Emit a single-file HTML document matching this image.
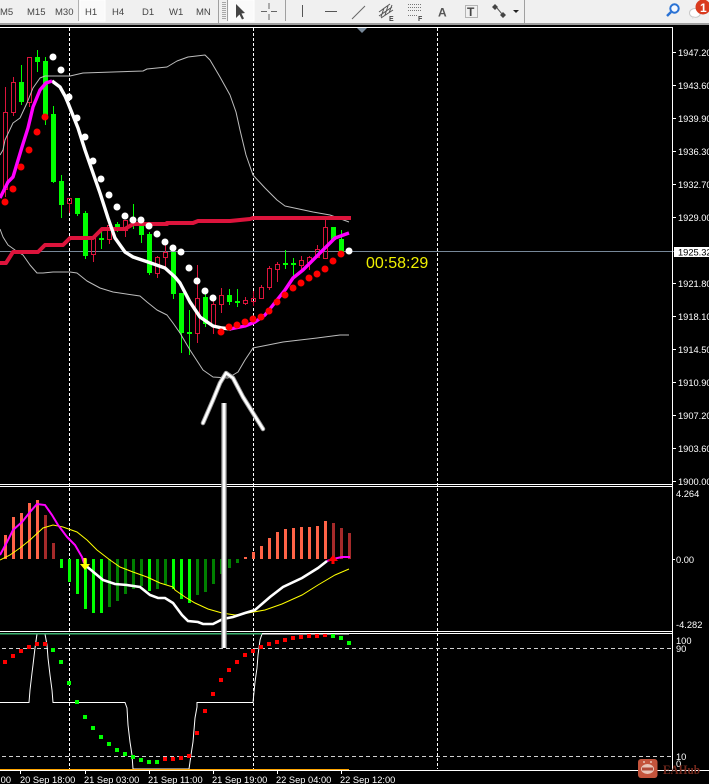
<!DOCTYPE html>
<html><head><meta charset="utf-8"><title>Chart</title>
<style>
html,body{margin:0;padding:0;background:#000;width:709px;height:784px;overflow:hidden}
svg{display:block}
text{font-family:"Liberation Sans",sans-serif}
</style></head><body>
<svg width="709" height="784" viewBox="0 0 709 784" xmlns="http://www.w3.org/2000/svg">
<rect width="709" height="784" fill="#000"/>
<!-- grid -->
<g stroke="#fff" stroke-width="1" stroke-dasharray="3 2" fill="none" shape-rendering="crispEdges">
<path d="M69.5 28V769M253.5 28V769M437.5 28V769"/>
</g>
<path d="M2 648.5H672M2 756.5H672" stroke="#d0d0d0" stroke-dasharray="4 3" fill="none" shape-rendering="crispEdges"/>
<!-- current price line -->
<rect x="0" y="251" width="674" height="1" fill="#778899"/>
<!-- green candles wicks -->
<path shape-rendering="crispEdges" stroke="#0f0" fill="none" d="M21.5 65V105M37.5 50V72M45.5 57V125M53.5 106V183M61.5 175V218M77.5 198V216M85.5 211V259M101.5 232V249M117.5 222V232M133.5 204V229M141.5 225V243M149.5 232V275M173.5 252V299M181.5 293V353M189.5 310V355M205.5 292V327M229.5 289V305M237.5 289V307M285.5 250V269M293.5 258V278M333.5 227V240M341.5 230V254"/>
<path shape-rendering="crispEdges" fill="#0f0" d="M19 82h5v20h-5zM35 57h5v5h-5zM43 61h5v54h-5zM51 114h5v68h-5zM59 181h5v24h-5zM75 198h5v16h-5zM83 213h5v43h-5zM99 238h5v2h-5zM115 224h5v4h-5zM131 220h5v6h-5zM139 225h5v10h-5zM147 234h5v39h-5zM171 252h5v42h-5zM179 293h5v40h-5zM187 332h5v2h-5zM203 297h5v27h-5zM227 295h5v7h-5zM235 301h5v2h-5zM283 263h5v2h-5zM291 263h5v2h-5zM331 227h5v13h-5zM339 239h5v13h-5z"/>
<!-- red hollow candles -->
<path shape-rendering="crispEdges" stroke="#dc143c" fill="none" d="M5.5 87V112M5.5 190V197M3.5 112.5h4v77h-4zM13.5 77V82M13.5 112V116M11.5 82.5h4v30h-4zM29.5 102V107M27.5 57.5h4v45h-4zM69.5 203V213M67.5 198.5h4v5h-4zM93.5 254V262M91.5 238.5h4v16h-4zM109.5 239V244M107.5 225.5h4v14h-4zM125.5 230V237M123.5 220.5h4v10h-4zM157.5 256V257M157.5 273V278M155.5 257.5h4v16h-4zM165.5 245V252M165.5 257V268M163.5 252.5h4v5h-4zM197.5 265V298M197.5 333V343M195.5 298.5h4v35h-4zM213.5 298V304M213.5 325V334M211.5 304.5h4v21h-4zM221.5 288V295M221.5 304V313M219.5 295.5h4v9h-4zM245.5 297V300M245.5 303V305M243.5 300.5h4v3h-4zM253.5 291V298M253.5 301V306M251.5 298.5h4v3h-4zM261.5 285V287M259.5 287.5h4v11h-4zM269.5 266V268M269.5 287V290M267.5 268.5h4v19h-4zM277.5 262V264M277.5 269V282M275.5 264.5h4v5h-4zM301.5 256V260M301.5 265V272M299.5 260.5h4v5h-4zM309.5 256V257M309.5 262V270M307.5 257.5h4v5h-4zM317.5 245V249M315.5 249.5h4v8h-4zM325.5 220V227M323.5 227.5h4v31h-4z"/>
<!-- bollinger -->
<g fill="none" stroke="#bdbdbd" stroke-width="1" stroke-linejoin="round">
<path d="M0 155L3 150L5 140L13 123L20 118L27 103L33 88L40 78L45 76L70 76L83 73L113 72L143 71L147 69L167 67L177 61L188 57L205 55L210 60L220 77L230 95L236 112L240 130L246 155L253 175L265 188L277 200L285 206L313 212L330 215L349 222"/>
<path d="M0 229L3 237L8 245L15 250L23 255L30 265L37 273L43 273L53 272L70 272L77 273L87 281L100 288L113 292L140 296L147 302L157 310L167 315L173 323L180 333L190 350L203 370L213 377L228 378L238 372L245 360L253 348L263 346L283 342L317 338L340 335L349 335"/>
</g>
<!-- stepped red -->
<path fill="none" stroke="#dc143c" stroke-width="4" stroke-linejoin="round" d="M0 263H6L13 252H38L45 245H63L70 238H93L102 229H125L133 224H167V223H193L198 221H230L250 219L253 218H351"/>
<!-- MA -->
<path fill="none" stroke="#fff" stroke-width="3.4" stroke-linejoin="round" d="M52 81L60 87L65 96L68 103L78 128L85 150L93 173L100 193L108 218L115 238L125 252L133 257L148 262L165 268L175 277L180 283L190 302L200 317L213 326L222 328L231 329"/>
<path fill="none" stroke="#f0f" stroke-width="3.4" stroke-linejoin="round" d="M0 198L8 182L13 177L22 147L28 128L33 107L40 90L46 83L52 81M230 329L245 326L255 322L265 315L273 305L285 290L293 278L303 270L320 253L335 238L349 233"/>
<!-- upper dots -->
<g fill="#fff">
<circle cx="53" cy="57" r="3.5"/><circle cx="61" cy="70" r="3.5"/><circle cx="69" cy="97" r="3.5"/><circle cx="77" cy="118" r="3.5"/><circle cx="85" cy="137" r="3.5"/><circle cx="93" cy="161" r="3.5"/><circle cx="101" cy="179" r="3.5"/><circle cx="109" cy="195" r="3.5"/><circle cx="117" cy="207" r="3.5"/><circle cx="125" cy="216" r="3.5"/><circle cx="133" cy="220" r="3.5"/><circle cx="141" cy="220" r="3.5"/><circle cx="149" cy="226" r="3.5"/><circle cx="157" cy="234" r="3.5"/><circle cx="165" cy="242" r="3.5"/><circle cx="173" cy="248" r="3.5"/><circle cx="181" cy="252" r="3.5"/><circle cx="189" cy="268" r="3.5"/><circle cx="197" cy="281" r="3.5"/><circle cx="205" cy="291" r="3.5"/><circle cx="213" cy="298" r="3.5"/><circle cx="349" cy="251" r="3.5"/>
</g>
<g fill="#f00">
<circle cx="45" cy="117" r="3.5"/><circle cx="37" cy="132" r="3.5"/><circle cx="29" cy="150" r="3.5"/><circle cx="21" cy="167" r="3.5"/><circle cx="13" cy="189" r="3.5"/><circle cx="5" cy="202" r="3.5"/><circle cx="221" cy="332" r="3.5"/><circle cx="229" cy="327" r="3.5"/><circle cx="237" cy="325" r="3.5"/><circle cx="245" cy="322" r="3.5"/><circle cx="253" cy="319" r="3.5"/><circle cx="261" cy="317" r="3.5"/><circle cx="269" cy="311" r="3.5"/><circle cx="277" cy="302" r="3.5"/><circle cx="285" cy="295" r="3.5"/><circle cx="293" cy="288" r="3.5"/><circle cx="301" cy="283" r="3.5"/><circle cx="309" cy="278" r="3.5"/><circle cx="317" cy="274" r="3.5"/><circle cx="325" cy="269" r="3.5"/><circle cx="333" cy="261" r="3.5"/><circle cx="341" cy="254" r="3.5"/>
</g>
<text x="366" y="268" font-size="16" fill="#f0f000">00:58:29</text>
<!-- MACD histogram -->
<path shape-rendering="crispEdges" fill="#ff6347" d="M4 535h3v24h-3zM12 517h3v42h-3zM20 513h3v46h-3zM28 503h3v56h-3zM36 500h3v59h-3zM244 557h3v2h-3zM252 552h3v7h-3zM260 546h3v13h-3zM268 538h3v21h-3zM276 532h3v27h-3zM284 529h3v30h-3zM292 528h3v31h-3zM300 527h3v32h-3zM308 527h3v32h-3zM316 526h3v33h-3zM324 521h3v38h-3z"/>
<path shape-rendering="crispEdges" fill="#a52a2a" d="M44 515h3v44h-3zM52 543h3v16h-3zM332 523h3v36h-3zM340 528h3v31h-3zM348 533h3v26h-3z"/>
<path shape-rendering="crispEdges" fill="#0f0" d="M60 559h3v9h-3zM68 559h3v23h-3zM76 559h3v35h-3zM84 559h3v50h-3zM92 559h3v54h-3zM100 559h3v54h-3zM148 559h3v32h-3zM172 559h3v30h-3zM180 559h3v40h-3zM188 559h3v44h-3z"/>
<path shape-rendering="crispEdges" fill="#008000" d="M108 559h3v48h-3zM116 559h3v42h-3zM124 559h3v35h-3zM132 559h3v30h-3zM140 559h3v27h-3zM156 559h3v30h-3zM164 559h3v26h-3zM196 559h3v36h-3zM204 559h3v33h-3zM212 559h3v25h-3zM220 559h3v15h-3zM228 559h3v9h-3zM236 559h3v4h-3z"/>
<path fill="none" stroke="#ff0" stroke-width="1" d="M0 560L10 555L20 548L30 540L43 528L53 525L63 527L77 532L87 540L97 550L110 560L120 567L133 572L147 577L160 583L173 587L175 590L185 597L195 603L208 609L222 613L235 615L248 613L265 610L282 604L302 595L318 585L335 575L349 569"/>
<path fill="none" stroke="#f0f" stroke-width="2" d="M0 555L7 542L13 530L22 522L30 512L37 504L45 505L52 515L58 525L67 537L75 545L82 557L84 563M327 561L333 559L342 557L350 557"/>
<path fill="none" stroke="#fff" stroke-width="2.6" d="M85 565L97 575L103 580L115 584L127 585L140 587L150 595L158 598L165 598L173 603L182 615L188 621L198 622L203 624L213 624L223 619L233 617L245 613L255 610L270 597L283 587L302 578L318 568L327 561"/>
<path d="M83.500 558h3v6h3.500l-5 6l-5-6h3.500z" fill="#ff0"/>
<path d="M331.500 564h3v-3h3.500l-5-6l-5 6h3.500z" fill="#f00"/>
<!-- Stochastic line -->
<path fill="none" stroke="#fff" stroke-width="1" d="M0 702.500H29L30 690L32 673L33 665L35 648L37 634H45L47 645L48 658L50 675L52 690L53 702.500H125L127 708L128 725L130 742L132 755L133 769H189L191 755L193 742L195 718L197 707L197 702.500H253L255 682L257 668L258 655L260 640L262 634H349"/>
<!-- squares -->
<path shape-rendering="crispEdges" fill="#f00" d="M3 660h4v4h-4zM11 654h4v4h-4zM19 649h4v4h-4zM27 645h4v4h-4zM35 642h4v4h-4zM43 642h4v4h-4zM163 757h4v4h-4zM171 757h4v4h-4zM179 756h4v4h-4zM187 754h4v4h-4zM195 731h4v4h-4zM203 709h4v4h-4zM211 692h4v4h-4zM219 678h4v4h-4zM227 668h4v4h-4zM235 660h4v4h-4zM243 653h4v4h-4zM251 649h4v4h-4zM259 645h4v4h-4zM267 642h4v4h-4zM275 640h4v4h-4zM283 638h4v4h-4zM291 636h4v4h-4zM299 635h4v4h-4zM307 634h4v4h-4zM315 634h4v4h-4zM323 633h4v4h-4z"/>
<path shape-rendering="crispEdges" fill="#0f0" d="M51 648h4v4h-4zM59 660h4v4h-4zM67 681h4v4h-4zM75 700h4v4h-4zM83 715h4v4h-4zM91 726h4v4h-4zM99 735h4v4h-4zM107 742h4v4h-4zM115 748h4v4h-4zM123 752h4v4h-4zM131 755h4v4h-4zM139 758h4v4h-4zM147 760h4v4h-4zM155 760h4v4h-4zM331 634h4v4h-4zM339 636h4v4h-4zM347 641h4v4h-4z"/>
<!-- frames -->
<g shape-rendering="crispEdges" fill="#fff">
<rect x="0" y="27" width="673" height="1"/>
<rect x="672" y="27" width="1" height="744"/>
<rect x="0" y="484" width="673" height="1"/>
<rect x="0" y="486" width="673" height="1"/>
<rect x="0" y="631" width="673" height="1"/>
<rect x="0" y="633" width="673" height="1"/>
<rect x="0" y="770" width="709" height="1"/>
<rect x="20" y="771" width="1" height="3"/><rect x="85" y="771" width="1" height="3"/><rect x="149" y="771" width="1" height="3"/><rect x="213" y="771" width="1" height="3"/><rect x="277" y="771" width="1" height="3"/><rect x="341" y="771" width="1" height="3"/>
<path d="M673 52h3v1h-3zM673 85h3v1h-3zM673 118h3v1h-3zM673 151h3v1h-3zM673 184h3v1h-3zM673 217h3v1h-3zM673 283h3v1h-3zM673 316h3v1h-3zM673 349h3v1h-3zM673 382h3v1h-3zM673 415h3v1h-3zM673 448h3v1h-3zM673 481h3v1h-3zM673 559h2v1h-2z"/>
</g>
<rect x="0" y="633" width="262" height="1.500" fill="#3cb371" shape-rendering="crispEdges"/>
<rect x="0" y="769" width="349" height="1" fill="#ffa500" shape-rendering="crispEdges"/>
<polygon points="357,28 367,28 362,33" fill="#778899"/>
<!-- arrow annotation -->
<path d="M224 403V648" stroke="#8a8a8a" stroke-width="5.500" fill="none"/>
<path d="M224 403V648" stroke="#fff" stroke-width="3" fill="none"/>
<path d="M203 423L213 400L220 383L226 373L233 378L243 397L253 413L263 429" stroke="#999" stroke-width="4.500" fill="none" stroke-linecap="round" stroke-linejoin="round"/>
<path d="M203 423L213 400L220 383L226 373L233 378L243 397L253 413L263 429" stroke="#fff" stroke-width="2.600" fill="none" stroke-linecap="round" stroke-linejoin="round"/>
<!-- price labels -->
<g font-size="9.300" fill="#fff">
<text x="678" y="56">1947.20</text><text x="678" y="89">1943.60</text><text x="678" y="122">1939.90</text><text x="678" y="155">1936.30</text><text x="678" y="188">1932.70</text><text x="678" y="221">1929.00</text><text x="678" y="287">1921.80</text><text x="678" y="320">1918.10</text><text x="678" y="353">1914.50</text><text x="678" y="386">1910.90</text><text x="678" y="419">1907.20</text><text x="678" y="452">1903.60</text><text x="678" y="485">1900.00</text>
<text x="676" y="497">4.264</text><text x="676" y="563">0.00</text><text x="676" y="628">-4.282</text>
<text x="676" y="644">100</text><text x="676" y="652">90</text><text x="676" y="760">10</text><text x="676" y="767">0</text>
<text x="0" y="783" text-anchor="end" dx="11">00</text>
<text x="20" y="783">20 Sep 18:00</text><text x="84" y="783">21 Sep 03:00</text><text x="148" y="783">21 Sep 11:00</text><text x="212" y="783">21 Sep 19:00</text><text x="276" y="783">22 Sep 04:00</text><text x="340" y="783">22 Sep 12:00</text>
</g>
<rect x="674" y="247" width="35" height="10" fill="#fff"/>
<text x="678" y="255.500" font-size="9.300" fill="#000">1925.32</text>
<!-- logo -->
<rect x="638" y="759" width="19.500" height="19" rx="3" fill="#c4543c"/>
<ellipse cx="647.500" cy="769" rx="6.500" ry="5" fill="#e8c5b8"/>
<rect x="642" y="767.500" width="11" height="3" fill="#b04a38"/>
<circle cx="644" cy="762" r="1" fill="#e8c5b8"/><circle cx="651" cy="762" r="1" fill="#e8c5b8"/>
<text x="663" y="774" font-size="12.500" font-weight="bold" fill="#73281c" textLength="37" lengthAdjust="spacingAndGlyphs" style="font-family:'Liberation Serif',serif">EAHub</text>
<!-- toolbar -->
<rect x="0" y="0" width="709" height="23" fill="#f0f0f0"/>
<rect x="0" y="23" width="709" height="2" fill="#a0a0a0"/>
<rect x="80" y="0" width="25" height="21" fill="#fafafa" stroke="#fff"/>
<rect x="229" y="0" width="25" height="21" fill="#fafafa" stroke="#fff"/>
<g font-size="9.500" fill="#444">
<text x="0" y="15">M5</text><text x="27" y="15">M15</text><text x="55" y="15">M30</text><text x="85" y="15">H1</text><text x="112" y="15">H4</text><text x="142" y="15">D1</text><text x="169" y="15">W1</text><text x="196" y="15">MN</text>
</g>
<g shape-rendering="crispEdges">
<rect x="78" y="0" width="1" height="21" fill="#b0b0b0"/>
<rect x="218" y="0" width="1" height="23" fill="#a0a0a0"/>
<path d="M222 2.500h4M222 4.500h4M222 6.500h4M222 8.500h4M222 10.500h4M222 12.500h4M222 14.500h4M222 16.500h4M222 18.500h4" stroke="#a8a8a8" fill="none"/>
<rect x="227" y="0" width="1" height="21" fill="#a0a0a0"/>
<rect x="285" y="0" width="1" height="21" fill="#a0a0a0"/>
<rect x="524" y="0" width="1" height="23" fill="#a0a0a0"/>
</g>
<path d="M236 4V18L239.500 14.500L242 19.500L244 18.500L241.500 13.500L245 13Z" fill="#444"/>
<path d="M261 11.500H267M271 11.500H277M269 3V9M269 14V20" stroke="#666" fill="none" shape-rendering="crispEdges"/>
<path d="M302.500 5V17M325 11.500H337" stroke="#555" fill="none" shape-rendering="crispEdges"/>
<path d="M352 19L365 6" stroke="#666" fill="none"/>
<path d="M379 12L390 4M379 16L392 7M381 18L393 10M384 8L381 17M388 6L385 15M392 5L389 13" stroke="#555" fill="none"/>
<text x="389" y="21" font-size="7" font-weight="bold" fill="#444">E</text>
<path d="M408 4.500H422M408 7.500H422M408 10.500H422M408 15.500H418" stroke="#777" stroke-dasharray="1 1" fill="none" shape-rendering="crispEdges"/>
<text x="418" y="21" font-size="7" font-weight="bold" fill="#444">F</text>
<text x="438" y="16.500" font-size="12" font-weight="bold" fill="#555">A</text>
<rect x="465.500" y="5.500" width="12" height="12" fill="none" stroke="#777" stroke-dasharray="1 1" shape-rendering="crispEdges"/>
<text x="467" y="16" font-size="12" font-weight="bold" fill="#444">T</text>
<path d="M495 4l3 3l-3 3l-3-3zM503 12l3 3l-3 3l-3-3z" fill="#444"/>
<path d="M497 8L502 14" stroke="#555" fill="none"/>
<path d="M513 10h6l-3 3z" fill="#222"/>
<circle cx="674.500" cy="8.500" r="4.200" fill="#f4f8ff" stroke="#2a72d4" stroke-width="2"/>
<path d="M671 12L667 16" stroke="#2a72d4" stroke-width="2.500"/>
<ellipse cx="695" cy="13" rx="5.500" ry="4.500" fill="#fff" stroke="#c8c8c8"/>
<path d="M693 16l-1 3l4-2z" fill="#ddd"/>
<circle cx="703" cy="7" r="7.500" fill="#d93a1e"/>
<text x="700" y="12" font-size="12" font-weight="bold" fill="#fff">1</text>
</svg>
</body></html>
